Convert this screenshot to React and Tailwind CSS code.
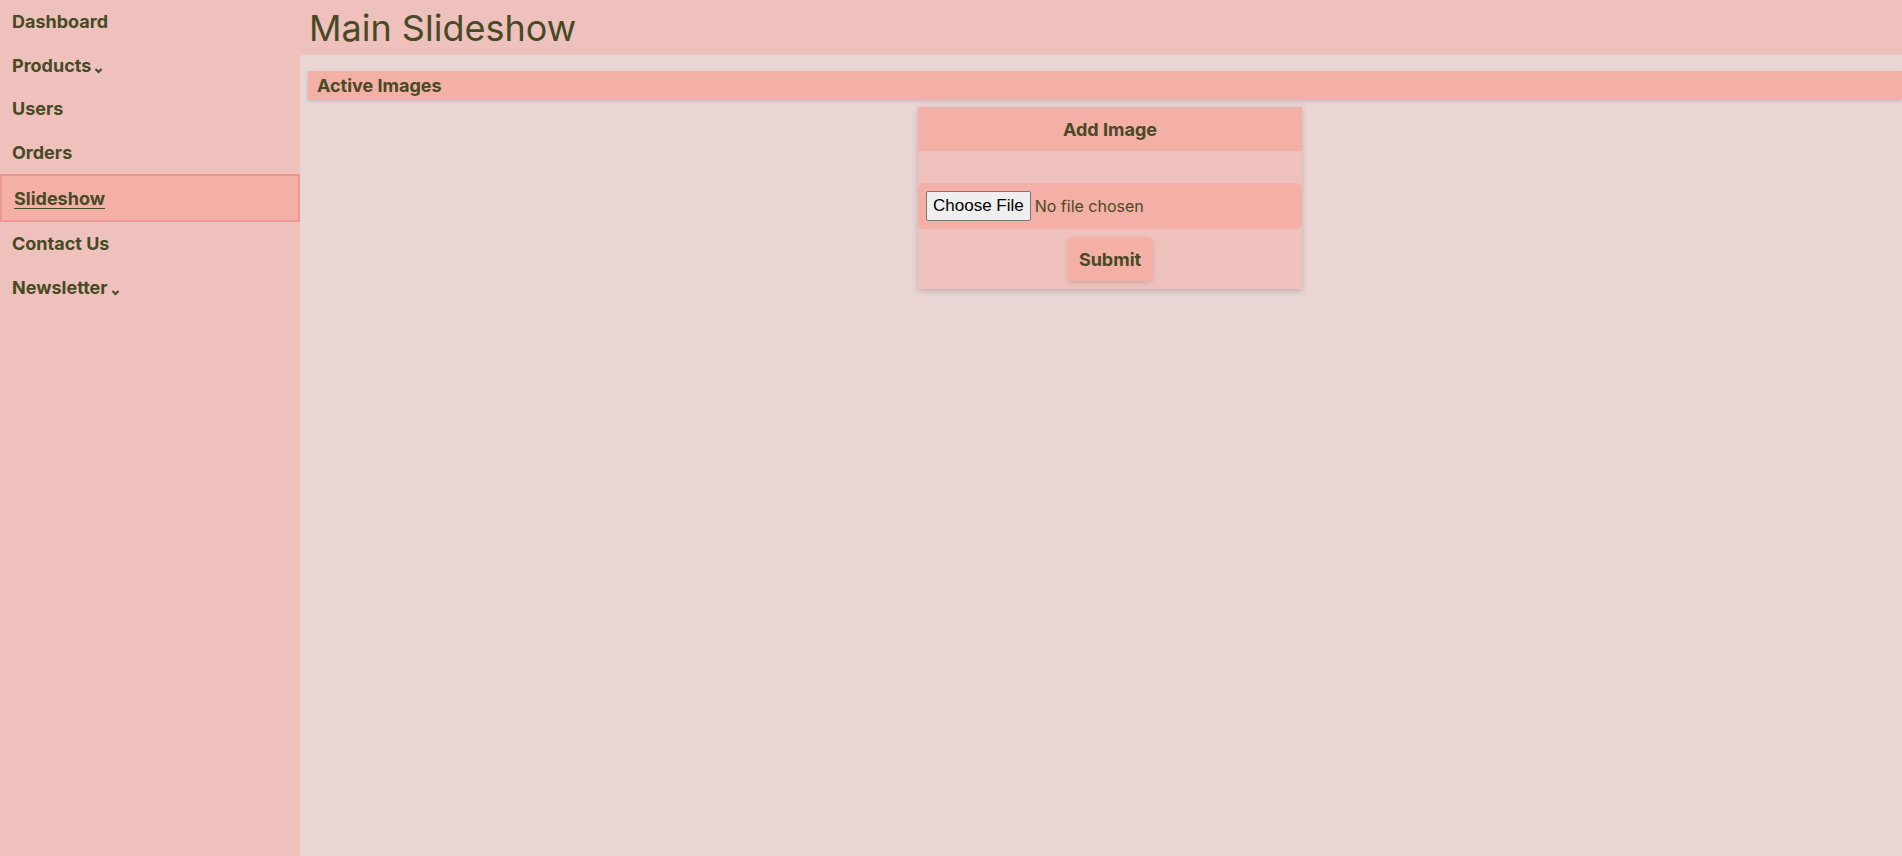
import React from 'react';

const navItems = [
  { label: 'Dashboard' },
  { label: 'Products', caret: true },
  { label: 'Users' },
  { label: 'Orders' },
  { label: 'Slideshow', active: true },
  { label: 'Contact Us' },
  { label: 'Newsletter', caret: true },
];

function Caret() {
  return (
    <svg width="9" height="7" viewBox="0 0 9 7" className="ml-[3px] mt-[10px]">
      <polyline points="1.5,2 4.5,5 7.5,2" fill="none" stroke="#474a24" strokeWidth="2" />
    </svg>
  );
}

export default function App() {
  return (
    <div className="flex min-h-screen h-[856px] font-['Inter',sans-serif] text-[#474a24]">
      <aside className="w-[300px] shrink-0 bg-[#efc1bc]">
        <nav className="flex flex-col">
          {navItems.map(item =>
            item.active ? (
              <a
                key={item.label}
                href="#"
                className="h-[48px] flex items-center px-[12px] bg-[#f4afa6] border-2 border-[#ea978f] text-[18px] font-bold underline underline-offset-[3px]"
              >
                {item.label}
              </a>
            ) : (
              <a key={item.label} href="#" className="h-[43.5px] flex items-center px-[12px] text-[18px] font-bold">
                {item.label}
                {item.caret && <Caret />}
              </a>
            )
          )}
        </nav>
      </aside>

      <main className="flex-1 flex flex-col bg-[#e8d5d4]">
        <header className="h-[55px] bg-[#efc1bc] flex items-center pl-[9px]">
          <h1 className="text-[36px] leading-none">Main Slideshow</h1>
        </header>

        <section className="pl-[8px] pt-[16px]">
          <div className="h-[28px] flex items-center px-[9px] bg-[#f4afa6] shadow-[0_2px_4px_rgba(0,0,0,0.15)]">
            <h2 className="text-[18px] font-bold">Active Images</h2>
          </div>

          <div className="flex justify-center pl-[10px] mt-[8px]">
            <form className="w-[384px] bg-[#efc1bc] shadow-[0_2px_6px_rgba(0,0,0,0.18)] pb-[8px]">
              <div className="h-[44px] flex items-center justify-center bg-[#f4afa6]">
                <h3 className="text-[18px] font-bold">Add Image</h3>
              </div>
              <div className="mt-[32px] h-[46px] flex items-center px-[8px] bg-[#f4afa6] rounded-md">
                <label className="flex items-center cursor-pointer">
                  <span className="h-[30px] flex items-center px-[6px] bg-[#efefef] border border-[#767676] rounded-[2px] text-black text-[17px] font-['Liberation_Sans',Arial,sans-serif]">
                    Choose File
                  </span>
                  <span className="ml-[4px] text-[16px]">No file chosen</span>
                  <input type="file" className="hidden" />
                </label>
              </div>
              <div className="flex justify-center mt-[8px]">
                <button type="button" className="w-[86px] h-[44px] bg-[#f4afa6] rounded-md text-[18px] font-bold shadow-[0_2px_4px_rgba(0,0,0,0.12)]">
                  Submit
                </button>
              </div>
            </form>
          </div>
        </section>
      </main>
    </div>
  );
}
